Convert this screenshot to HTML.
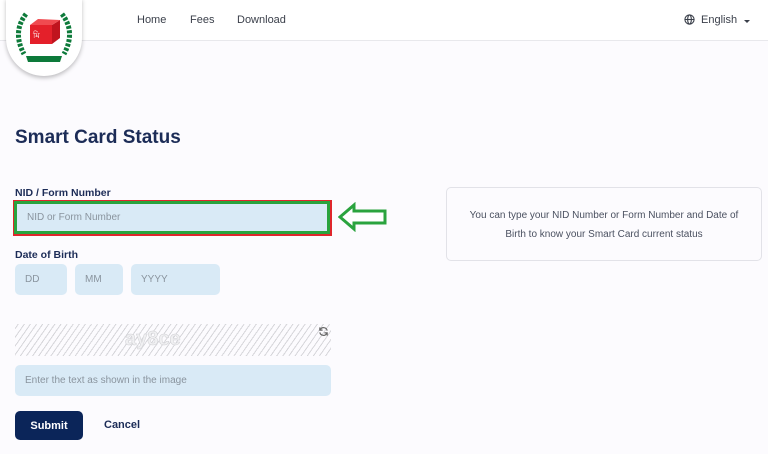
<!DOCTYPE html>
<html><head><style>
*{margin:0;padding:0;box-sizing:border-box}
body{width:768px;height:454px;background:#fcfbfe;font-family:"Liberation Sans",sans-serif;position:relative;overflow:hidden}
.hdr{position:absolute;left:0;top:0;width:768px;height:41px;background:#fff;border-bottom:1px solid #e8e8ec}
.nav{position:absolute;top:13px;font-size:11px;color:#3a3f4a}
.logo{position:absolute;left:6px;top:-2px;width:76px;height:78px;border-radius:0 0 38px 38px;background:#fff;box-shadow:0 2px 4px rgba(0,0,0,.25)}
.t{position:absolute;color:#1c2c57;font-weight:bold}
.inp{position:absolute;background:#d9eaf6;border-radius:5px;font-size:10px;color:#8a949e;padding-left:10px;display:flex;align-items:center}
</style></head><body>
<div class="hdr"></div>
<div class="logo">
<svg width="76" height="78" viewBox="0 0 76 78">
<path d="M20 16 Q6 34 18 56" stroke="#0d7a3a" stroke-width="5" fill="none" stroke-dasharray="3 1.5"/>
<path d="M56 16 Q70 34 58 56" stroke="#0d7a3a" stroke-width="5" fill="none" stroke-dasharray="3 1.5"/>
<rect x="24" y="27" width="22" height="19" fill="#e4202a"/>
<polygon points="46,27 54,22 54,40 46,46" fill="#c0141e"/>
<polygon points="24,27 32,21 54,22 46,27" fill="#f04a50"/>
<text x="27" y="40" font-size="8" fill="#fff">মি</text>
<path d="M20 58 L56 58 L54 64 L22 64Z" fill="#0d7a3a"/>
</svg></div>
<div class="nav" style="left:137px;top:14px">Home</div>
<div class="nav" style="left:190px;top:14px">Fees</div>
<div class="nav" style="left:237px;top:14px">Download</div>
<svg style="position:absolute;left:684px;top:14px" width="11" height="11" viewBox="0 0 12 12" fill="none" stroke="#3a3f4a" stroke-width="1.2"><circle cx="6" cy="6" r="5"/><ellipse cx="6" cy="6" rx="2" ry="5"/><path d="M1 6h10"/></svg>
<div class="nav" style="left:701px;top:14px">English</div>
<div style="position:absolute;left:744px;top:20px;border:3px solid transparent;border-top:3px solid #3a3f4a;border-bottom:0"></div>
<div class="t" style="left:15px;top:127px;font-size:19px">Smart Card Status</div>
<div class="t" style="left:15px;top:187px;font-size:10.5px">NID / Form Number</div>
<div style="position:absolute;left:13px;top:200px;width:319px;height:36px;border:2px solid #e0262c"></div>
<div class="inp" style="left:14px;top:201px;width:316px;height:33px;border:3px solid #2aa33e;border-radius:0">NID or Form Number</div>
<svg style="position:absolute;left:338px;top:202px" width="50" height="30" viewBox="0 0 50 30"><polygon points="2,15 16,3 16,9 47,9 47,21 16,21 16,27" fill="#fff" stroke="#2aa33e" stroke-width="3"/></svg>
<div class="t" style="left:15px;top:249px;font-size:10.5px">Date of Birth</div>
<div class="inp" style="left:15px;top:264px;width:52px;height:31px">DD</div>
<div class="inp" style="left:75px;top:264px;width:48px;height:31px">MM</div>
<div class="inp" style="left:131px;top:264px;width:89px;height:31px">YYYY</div>
<div style="position:absolute;left:15px;top:324px;width:316px;height:32px;background:repeating-linear-gradient(-55deg,#fcfbfe 0 4px,#d6d6da 4px 5px)"></div>
<div style="position:absolute;left:125px;top:328px;font-size:20px;color:#f0f0f2;font-weight:bold;-webkit-text-stroke:0.5px #d0d0d4">ay8ce</div>
<svg style="position:absolute;left:318px;top:326px" width="11" height="11" viewBox="0 0 12 12" fill="none" stroke="#666" stroke-width="1.3"><path d="M10 5A4 4 0 0 0 2.5 4M2 7A4 4 0 0 0 9.5 8"/><path d="M2 1.5V4.5H5M10 10.5V7.5H7"/></svg>
<div class="inp" style="left:15px;top:365px;width:316px;height:31px">Enter the text as shown in the image</div>
<div style="position:absolute;left:15px;top:411px;width:68px;height:29px;background:#0b2559;border-radius:5px;color:#fff;font-weight:bold;font-size:11px;display:flex;align-items:center;justify-content:center">Submit</div>
<div class="t" style="left:104px;top:419px;font-size:11px">Cancel</div>
<div style="position:absolute;left:446px;top:187px;width:316px;height:74px;border:1px solid #e2e2e8;border-radius:5px;background:#fcfbfe;font-size:10px;color:#4a5060;text-align:center;line-height:19px;padding-top:18px">You can type your NID Number or Form Number and Date of<br>Birth to know your Smart Card current status</div>
</body></html>
